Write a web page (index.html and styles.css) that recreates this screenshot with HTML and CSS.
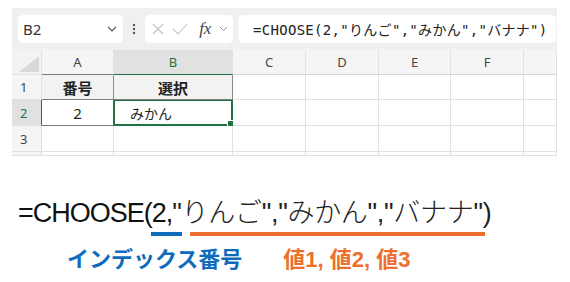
FILE: index.html
```html
<!DOCTYPE html>
<html lang="ja">
<head>
    <meta charset="UTF-8">
    <title>CHOOSE</title>
    <link rel="stylesheet" href="styles.css">
</head>
<body>
    <div class="sheet">
        <div class="toolbar">
            <div class="namebox">
                <span>B2</span>
                <svg class="chev" width="10" height="6" viewBox="0 0 10 6"><path d="M1 1l4 4 4-4" fill="none" stroke="#555" stroke-width="1.2"/></svg>
            </div>
            <div class="grip">
                <svg width="4" height="12" viewBox="0 0 4 12"><circle cx="2" cy="2" r="1.2" fill="#555"/><circle cx="2" cy="6" r="1.2" fill="#555"/><circle cx="2" cy="10" r="1.2" fill="#555"/></svg>
            </div>
            <div class="fxbox">
                <svg width="12" height="12" viewBox="0 0 12 12"><path d="M1 1l10 10M11 1L1 11" stroke="#c2c2c2" stroke-width="1.1"/></svg>
                <svg width="16" height="12" viewBox="0 0 16 12"><path d="M1 6l5 5L15 1" fill="none" stroke="#c2c2c2" stroke-width="1.1"/></svg>
                <span class="fx">fx</span>
                <svg width="9" height="6" viewBox="0 0 9 6"><path d="M1 1l3.5 3.5L8 1" fill="none" stroke="#999" stroke-width="1"/></svg>
            </div>
            <div class="formula">=CHOOSE(2,"りんご","みかん","バナナ")</div>
        </div>

        <div class="grid">
            <div class="corner">
                <svg width="20" height="16" viewBox="0 0 20 16"><path d="M20 0V16H0Z" fill="#d9d9d9"/></svg>
            </div>
            <div class="colhead edge-a">A</div>
            <div class="colhead active-col">B</div>
            <div class="colhead">C</div>
            <div class="colhead">D</div>
            <div class="colhead">E</div>
            <div class="colhead">F</div>
            <div class="colhead"></div>

            <div class="rowhead">1</div>
            <div class="cell th th-a">番号</div>
            <div class="cell th th-b">選択</div>
            <div class="cell"></div>
            <div class="cell"></div>
            <div class="cell"></div>
            <div class="cell"></div>
            <div class="cell"></div>

            <div class="rowhead active-row">2</div>
            <div class="cell td-a">2</div>
            <div class="cell td-b">みかん<span class="handle"></span></div>
            <div class="cell"></div>
            <div class="cell"></div>
            <div class="cell"></div>
            <div class="cell"></div>
            <div class="cell"></div>

            <div class="rowhead">3</div>
            <div class="cell"></div>
            <div class="cell"></div>
            <div class="cell"></div>
            <div class="cell"></div>
            <div class="cell"></div>
            <div class="cell"></div>
            <div class="cell"></div>

            <div class="rowhead stub"></div>
            <div class="cell"></div>
            <div class="cell"></div>
            <div class="cell"></div>
            <div class="cell"></div>
            <div class="cell"></div>
            <div class="cell"></div>
            <div class="cell"></div>
        </div>
    </div>

    <div class="explain">
        <div class="big">=CHOOSE(2,<span class="args">"りんご","みかん","バナナ")</span></div>
        <div class="bars">
            <span class="bar bar-index"></span>
            <span class="bar bar-values"></span>
        </div>
        <div class="labels">
            <span class="label-index">インデックス番号</span>
            <span class="label-values">値1, 値2, 値3</span>
        </div>
    </div>
</body>
</html>
```

FILE: styles.css
```css
body {
    margin: 0;
    padding: 8px 12px 0;
    background-color: #fff;
    font-family: 'Noto Sans', 'Noto Sans CJK JP', sans-serif;
    color: #222;
}

.sheet {
    width: 545px;
    background-color: #f0f0f0;
}

.toolbar {
    display: flex;
    align-items: center;
    height: 42px;
    padding: 0 1px 0 6px;
    box-sizing: border-box;
}

.namebox,
.fxbox,
.formula {
    height: 28px;
    background-color: #fff;
    border-radius: 5px;
    display: flex;
    align-items: center;
    box-sizing: border-box;
}

.namebox {
    width: 105px;
    padding: 0 6px 0 5px;
    justify-content: space-between;
    font-size: 15px;
    color: #333;
}

.grip {
    width: 22px;
    display: flex;
    justify-content: center;
}

.fxbox {
    width: 88px;
    padding: 0 5px 0 7px;
    justify-content: space-between;
}

.fx {
    font-family: 'Liberation Serif', 'DejaVu Serif', serif;
    font-style: italic;
    font-size: 17px;
    color: #444;
    margin-left: 4px;
}

.formula {
    flex: 1;
    margin-left: 5px;
    padding-left: 15px;
    font-family: 'DejaVu Sans Mono', 'Noto Sans CJK JP', monospace;
    font-size: 14px;
    letter-spacing: 0.3px;
    color: #222;
    white-space: nowrap;
}

.grid {
    display: grid;
    grid-template-columns: 30px 72px 119px 73px 73px 72px 73px 33px;
    grid-template-rows: 25px 25px 26px 26px 4px;
    background-color: #fff;
}

.grid > div {
    box-sizing: border-box;
    border-right: 1px solid #e1e1e1;
    border-bottom: 1px solid #e1e1e1;
}

.corner {
    background-color: #f3f3f3;
    display: flex;
    align-items: flex-end;
    justify-content: flex-end;
    padding: 0 2px 2px 0;
}

.colhead {
    background-color: #f5f5f5;
    font-size: 13px;
    color: #444;
    display: flex;
    align-items: center;
    justify-content: center;
    border-bottom-color: #d4d4d4 !important;
}

.edge-a {
    border-bottom-color: #7a7a7a !important;
}

.active-col {
    background-color: #e1e1e1;
    color: #217346;
    border-bottom: 1px solid #217346 !important;
}

.rowhead {
    background-color: #f5f5f5;
    font-size: 13px;
    color: #444;
    padding-left: 8px;
    display: flex;
    align-items: center;
}

.active-row {
    background-color: #e1e1e1;
    color: #217346;
    border-right: 1px solid #217346 !important;
}

.cell {
    display: flex;
    align-items: center;
    font-family: 'Noto Sans CJK JP', sans-serif;
    font-size: 14px;
    position: relative;
}

.th {
    background-color: #f2f2f2;
    font-weight: bold;
    justify-content: center;
    border-bottom-color: #7a7a7a !important;
    border-right-color: #8a8a8a !important;
    font-size: 15px;
}

.td-a {
    justify-content: center;
    font-family: 'Noto Sans', sans-serif;
    font-size: 15px;
    border-bottom-color: #7a7a7a !important;
    border-right-color: #217346 !important;
}

.td-b {
    border: 2px solid #217346 !important;
    border-left-width: 1px !important;
    border-top-width: 1px !important;
    padding-left: 15px;
    font-size: 14px;
}

.handle {
    position: absolute;
    right: -3px;
    bottom: -3px;
    width: 5px;
    height: 5px;
    background-color: #217346;
    border: 1px solid #fff;
}

.explain {
    padding-top: 42px;
}

.big {
    font-family: 'Liberation Sans', 'Noto Sans CJK JP', sans-serif;
    font-size: 27px;
    font-weight: 300;
    letter-spacing: -1px;
    line-height: 31px;
    padding-left: 6px;
    color: #111;
    white-space: nowrap;
}

.args {
    letter-spacing: -0.3px;
    color: #222;
}

.bars {
    display: flex;
    margin-top: 3px;
    padding-left: 139px;
    gap: 8px;
}

.bar {
    height: 4px;
}

.bar-index {
    width: 31px;
    background-color: #0f6cbd;
}

.bar-values {
    width: 295px;
    background-color: #ec6f2d;
}

.labels {
    display: flex;
    padding-left: 55px;
    margin-top: 10px;
    gap: 41px;
    font-family: 'Liberation Sans', 'Noto Sans CJK JP', sans-serif;
    font-weight: bold;
    font-size: 22px;
    line-height: 28px;
}

.label-index {
    color: #0f6cbd;
}

.label-values {
    color: #ec6f2d;
}
```
